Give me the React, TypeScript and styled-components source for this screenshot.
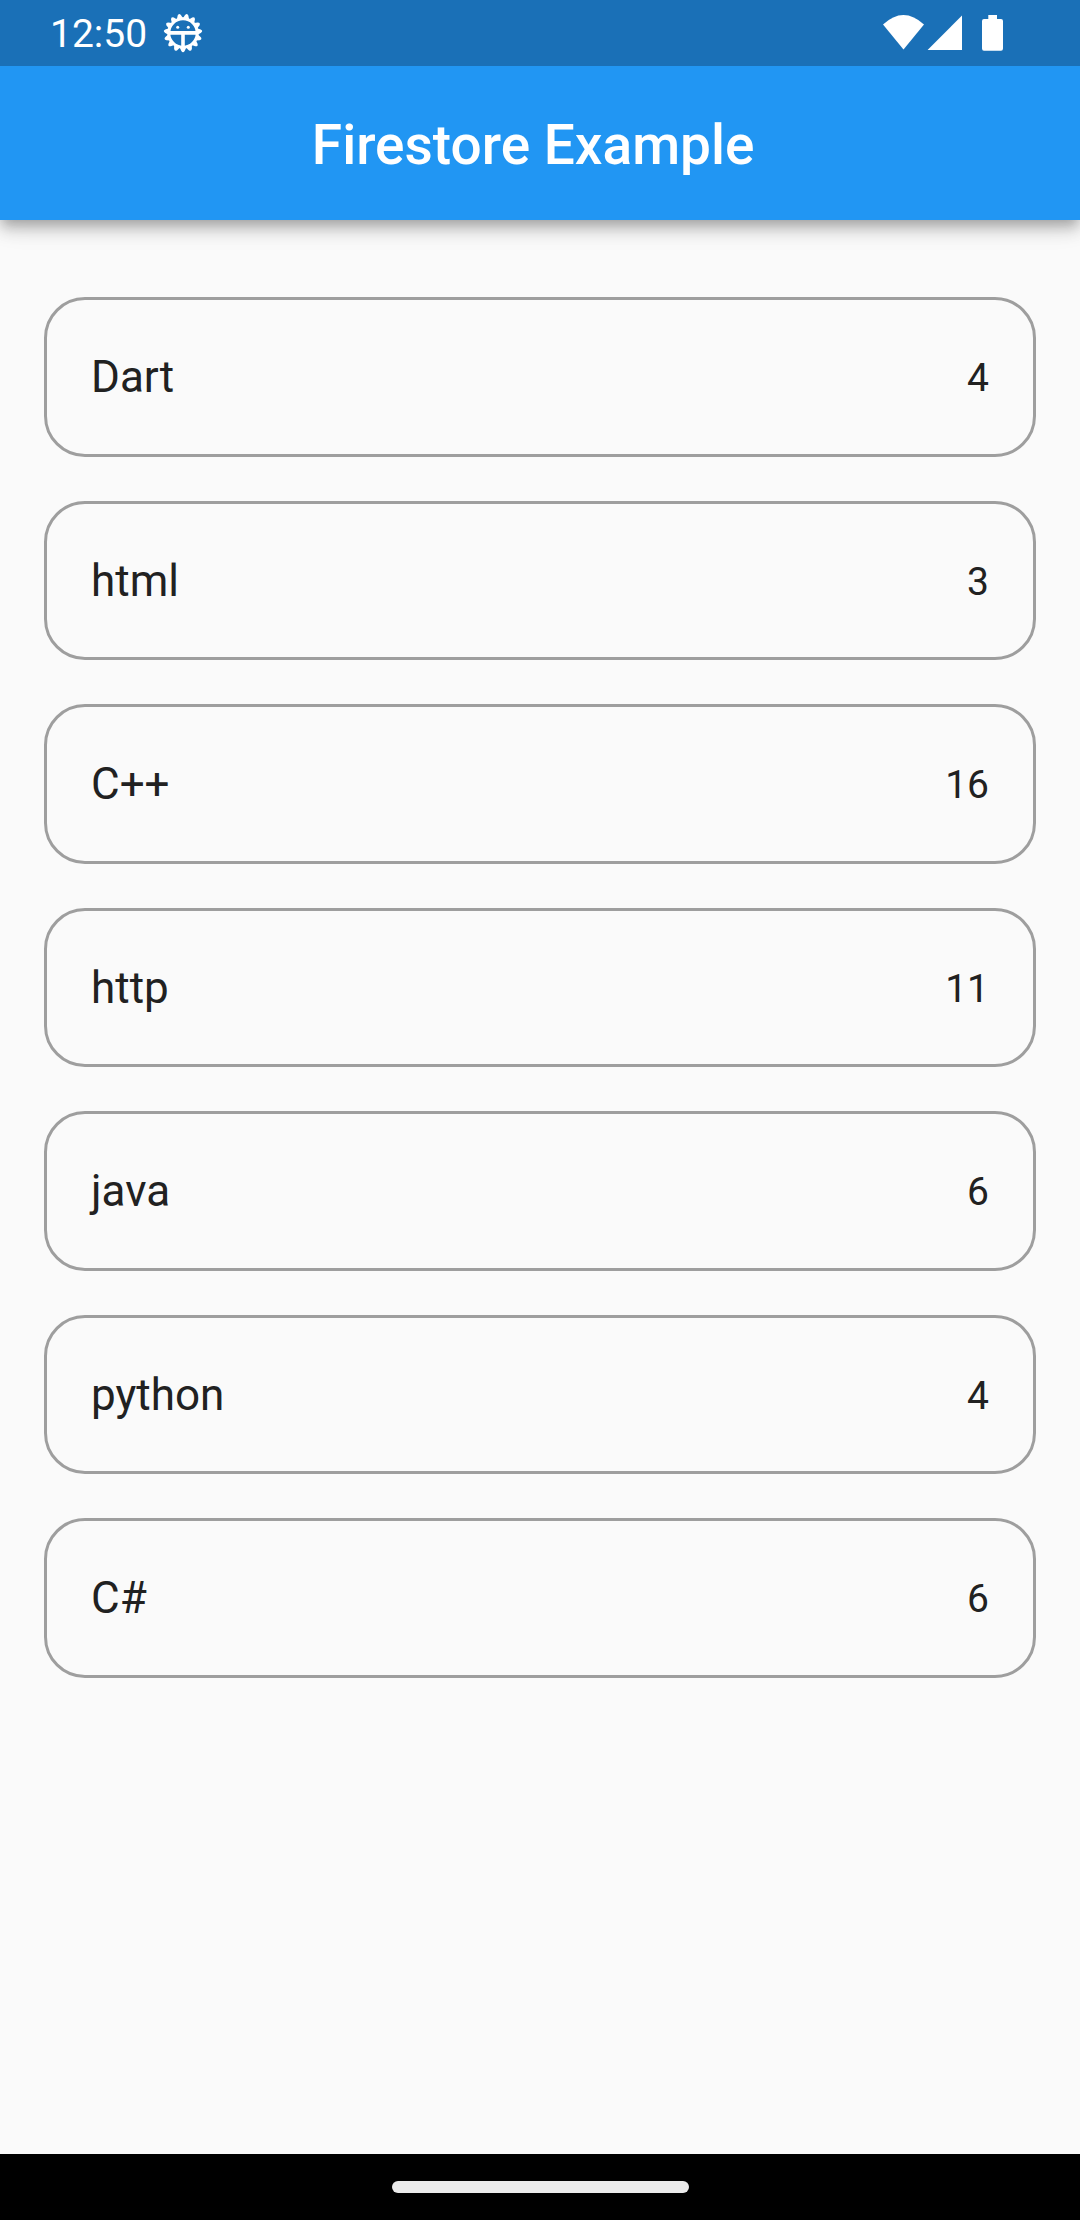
import React from "react";
import styled, { createGlobalStyle } from "styled-components";

const GlobalStyle = createGlobalStyle`
  * { box-sizing: border-box; }
  body {
    margin: 0;
    background: #fafafa;
    color: #212121;
    font-family: Roboto, "Noto Sans", sans-serif;
  }
`;

const Screen = styled.div`
  display: flex;
  flex-direction: column;
  min-height: 100vh;
`;

const StatusBar = styled.div`
  display: flex;
  align-items: center;
  justify-content: space-between;
  height: 66px;
  padding: 0 76px 0 50px;
  background: #1a70b7;
  color: #fff;
`;

const StatusGroup = styled.div`
  display: flex;
  align-items: center;
  gap: 16px;
`;

const Clock = styled.time`
  padding-top: 2px;
  font-size: 39px;
  line-height: 52px;
`;

const Icon = styled.svg`
  display: block;
  flex: none;
`;

const AppBar = styled.header`
  display: flex;
  align-items: center;
  justify-content: center;
  height: 154px;
  padding-top: 4px;
  background: #2196f3;
  color: #fff;
  box-shadow:
    0 6px 11px -3px rgba(0, 0, 0, 0.2),
    0 11px 14px 0 rgba(0, 0, 0, 0.14),
    0 3px 28px 0 rgba(0, 0, 0, 0.12);
  clip-path: inset(0 0 -44px 0);
`;

const Title = styled.h1`
  margin: 0;
  font-size: 55px;
  font-weight: 500;
  line-height: 66px;
  white-space: pre;
`;

const List = styled.ul`
  flex: 1;
  display: flex;
  flex-direction: column;
  gap: 44px;
  margin: 0;
  padding: 77px 44px;
  list-style: none;
`;

const Card = styled.li`
  display: flex;
  align-items: center;
  justify-content: space-between;
  height: 160px;
  padding: 0 44px;
  border: 3px solid #9e9e9e;
  border-radius: 41px;

  &:nth-child(even) {
    height: 159px;
  }
`;

const Name = styled.span`
  font-size: 44px;
  line-height: 52px;
`;

const Count = styled.span`
  padding-top: 2px;
  font-size: 39px;
  line-height: 52px;
`;

const NavBar = styled.footer`
  display: flex;
  align-items: center;
  justify-content: center;
  height: 66px;
  background: #000;
`;

const HomeHandle = styled.button`
  width: 297px;
  height: 12px;
  padding: 0;
  border: 0;
  border-radius: 6px;
  background: #ebebeb;
`;

const languages = [
  { name: "Dart", count: 4 },
  { name: "html", count: 3 },
  { name: "C++", count: 16 },
  { name: "http", count: 11 },
  { name: "java", count: 6 },
  { name: "python", count: 4 },
  { name: "C#", count: 6 },
];

const TEETH = 15;

function GearIcon() {
  return (
    <Icon width="40" height="40" viewBox="-20 -20 40 40" aria-hidden="true">
      <circle r="14.2" fill="none" stroke="#fff" strokeWidth="3" />
      {Array.from({ length: TEETH }, (_, i) => (
        <path
          key={i}
          d="M-3.2 14.5L-1.700 18Q0 20.600 1.700 18L3.2 14.5Z"
          fill="#fff"
          transform={`rotate(${(i * 360) / TEETH})`}
        />
      ))}
      <path d="M-14 -2H14V1.700H1.800V15H-1.800V1.700H-14Z" fill="#fff" />
      <circle cx="-5.3" cy="-5.800" r="1.5" fill="#fff" />
      <circle cx="5.3" cy="-5.800" r="1.5" fill="#fff" />
    </Icon>
  );
}

function SignalIcons() {
  return (
    <Icon width="121" height="36" viewBox="0 0 121 36" fill="#fff" aria-hidden="true">
      <path d="M0 9.5Q20.4 -9.5 41 9.5L20.5 34.5Z" />
      <path d="M44.6 35L79 0.5V35Z" />
      <path d="M105.300 0H114V4H118Q120 4 120 6V33.600Q120 35.800 118 35.800H101Q99 35.800 99 33.600V6Q99 4 101 4H105.300Z" />
    </Icon>
  );
}

export default function App() {
  return (
    <Screen>
      <GlobalStyle />
      <StatusBar>
        <StatusGroup>
          <Clock>12:50</Clock>
          <GearIcon />
        </StatusGroup>
        <SignalIcons />
      </StatusBar>
      <AppBar>
        <Title>{"Firestore Example "}</Title>
      </AppBar>
      <List>
        {languages.map(({ name, count }) => (
          <Card key={name}>
            <Name>{name}</Name>
            <Count>{count}</Count>
          </Card>
        ))}
      </List>
      <NavBar>
        <HomeHandle aria-label="Home" />
      </NavBar>
    </Screen>
  );
}
